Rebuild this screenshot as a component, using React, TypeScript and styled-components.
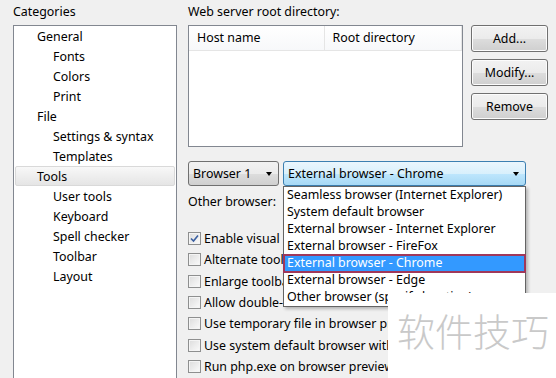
import React from 'react';
import styled, { createGlobalStyle } from 'styled-components';

const GlobalStyle = createGlobalStyle`
  html, body {
    margin: 0;
    padding: 0;
    background: #f0f0f0;
  }
  body {
    font-family: 'Noto Sans', 'Open Sans', Arial, sans-serif;
    font-size: 12.4px;
    color: #000;
  }
`;

const categories: { label: string; child?: boolean; selected?: boolean }[] = [
  { label: 'General' },
  { label: 'Fonts', child: true },
  { label: 'Colors', child: true },
  { label: 'Print', child: true },
  { label: 'File' },
  { label: 'Settings & syntax', child: true },
  { label: 'Templates', child: true },
  { label: 'Tools', selected: true },
  { label: 'User tools', child: true },
  { label: 'Keyboard', child: true },
  { label: 'Spell checker', child: true },
  { label: 'Toolbar', child: true },
  { label: 'Layout', child: true },
];

const browsers = [
  'Seamless browser (Internet Explorer)',
  'System default browser',
  'External browser - Internet Explorer',
  'External browser - FireFox',
  'External browser - Chrome',
  'External browser - Edge',
  'Other browser (specify location)',
];

const options: { label: string; checked?: boolean }[] = [
  { label: 'Enable visual editing toolbar', checked: true },
  { label: 'Alternate toolbar layout' },
  { label: 'Enlarge toolbar buttons' },
  { label: 'Allow double-click in toolbar' },
  { label: 'Use temporary file in browser preview' },
  { label: 'Use system default browser with PHP files' },
  { label: 'Run php.exe on browser preview' },
];

const App: React.FC = () => {
  return (
    <Page>
      <GlobalStyle />
      <LeftColumn>
        <Label>Categories</Label>
        <Tree>
          {categories.map((c) => (
            <TreeRow key={c.label} $child={c.child} $selected={c.selected}>
              {c.label}
            </TreeRow>
          ))}
        </Tree>
      </LeftColumn>
      <RightColumn>
        <Label>Web server root directory:</Label>
        <ServerRow>
          <ListBox>
            <ListHeader>
              <HeaderCell $width={136}>Host name</HeaderCell>
              <HeaderCell $width={138}>Root directory</HeaderCell>
            </ListHeader>
          </ListBox>
          <ButtonStack>
            <Button>Add...</Button>
            <Button>Modify...</Button>
            <Button>Remove</Button>
          </ButtonStack>
        </ServerRow>
        <SelectRow>
          <Select $width={91}>
            Browser 1
            <Arrow />
          </Select>
          <Select $width={243} $active>
            External browser - Chrome
            <Arrow />
          </Select>
          <Dropdown>
            {browsers.map((b) => (
              <DropItem key={b} $selected={b === 'External browser - Chrome'}>
                {b}
              </DropItem>
            ))}
          </Dropdown>
        </SelectRow>
        <OtherRow>Other browser:</OtherRow>
        <CheckList>
          {options.map((o) => (
            <CheckRow key={o.label}>
              <CheckBox $checked={o.checked}>
                {o.checked && (
                  <svg width="9" height="9" viewBox="0 0 9 9">
                    <path d="M1 4.5 L3.5 7 L8 1.5" fill="none" stroke="#3a5fa0" strokeWidth="1.6" />
                  </svg>
                )}
              </CheckBox>
              {o.label}
            </CheckRow>
          ))}
        </CheckList>
      </RightColumn>
      <Watermark>软件技巧</Watermark>
    </Page>
  );
};

export default App;

const Page = styled.div`
  position: relative;
  width: 556px;
  height: 378px;
  overflow: hidden;
  display: flex;
  background: #f0f0f0;
`;

const LeftColumn = styled.div`
  display: flex;
  flex-direction: column;
  padding-left: 13px;
  width: 164px;
  margin-right: 11px;
`;

const Label = styled.div`
  height: 20px;
  line-height: 16px;
  padding-top: 4px;
  box-sizing: border-box;
  margin-bottom: 5px;
  white-space: nowrap;
`;

const Tree = styled.div`
  flex: 1;
  margin-bottom: -20px;
  background: #fff;
  border: 1px solid #828790;
`;

const TreeRow = styled.div<{ $child?: boolean; $selected?: boolean }>`
  height: 20px;
  line-height: 19px;
  box-sizing: border-box;
  margin: 0 1px;
  padding-left: ${(p) => (p.$child ? 37 : 21)}px;
  border: 1px solid ${(p) => (p.$selected ? '#d9d9d9' : 'transparent')};
  border-radius: 2px;
  background: ${(p) =>
    p.$selected ? 'linear-gradient(#f8f8f8, #e5e5e5)' : 'transparent'};
  white-space: nowrap;
`;

const RightColumn = styled.div`
  position: relative;
  flex: 1;
  display: flex;
  flex-direction: column;
`;

const ServerRow = styled.div`
  display: flex;
  gap: 8px;
  height: 122px;
`;

const ListBox = styled.div`
  width: 275px;
  background: #fff;
  border: 1px solid #828790;
  box-sizing: border-box;
`;

const ListHeader = styled.div`
  display: flex;
  height: 24px;
  border-bottom: 1px solid #e5e5e5;
  background: linear-gradient(#fff, #f7f8fa);
`;

const HeaderCell = styled.div<{ $width: number }>`
  width: ${(p) => p.$width}px;
  padding-left: 8px;
  box-sizing: border-box;
  line-height: 24px;
  border-right: 1px solid #e5e5e5;
  white-space: nowrap;
`;

const ButtonStack = styled.div`
  display: flex;
  flex-direction: column;
  gap: 7px;
`;

const Button = styled.div`
  width: 77px;
  height: 27px;
  box-sizing: border-box;
  border: 1px solid #707070;
  border-radius: 3px;
  background: linear-gradient(#f2f2f2 0%, #ebebeb 50%, #dddddd 51%, #cfcfcf 100%);
  box-shadow: inset 0 0 0 1px #fcfcfc;
  display: flex;
  align-items: center;
  justify-content: center;
`;

const SelectRow = styled.div`
  position: relative;
  display: flex;
  gap: 4px;
  margin-top: 14px;
  height: 25px;
`;

const Select = styled.div<{ $width: number; $active?: boolean }>`
  position: relative;
  width: ${(p) => p.$width}px;
  height: 25px;
  box-sizing: border-box;
  padding-left: 4px;
  line-height: 23px;
  border: 1px solid ${(p) => (p.$active ? '#3c7fb1' : '#707070')};
  border-radius: 3px;
  background: ${(p) =>
    p.$active
      ? 'linear-gradient(#eaf6fd 0%, #d9f0fc 50%, #bee6fd 51%, #a7d9f5 100%)'
      : 'linear-gradient(#f2f2f2 0%, #ebebeb 50%, #dddddd 51%, #cfcfcf 100%)'};
  white-space: nowrap;
`;

const Arrow = styled.span`
  position: absolute;
  right: 6px;
  top: 10px;
  width: 0;
  height: 0;
  border-left: 3.5px solid transparent;
  border-right: 3.5px solid transparent;
  border-top: 4px solid #000;
`;

const Dropdown = styled.div`
  position: absolute;
  left: 95px;
  top: 25px;
  width: 243px;
  box-sizing: border-box;
  background: #fff;
  border: 1px solid #646464;
  box-shadow: 2px 2px 3px rgba(0, 0, 0, 0.25);
  z-index: 2;
`;

const DropItem = styled.div<{ $selected?: boolean }>`
  height: 17px;
  line-height: 16px;
  padding-left: 3px;
  box-sizing: border-box;
  white-space: nowrap;
  color: ${(p) => (p.$selected ? '#fff' : '#000')};
  background: ${(p) => (p.$selected ? '#3399ff' : 'transparent')};
  outline: ${(p) => (p.$selected ? '2px solid #a0385a' : 'none')};
  outline-offset: -1px;
`;

const OtherRow = styled.div`
  height: 22px;
  line-height: 22px;
  margin-top: 5px;
`;

const CheckList = styled.div`
  display: flex;
  flex-direction: column;
  margin-top: 15px;
`;

const CheckRow = styled.div`
  display: flex;
  align-items: center;
  gap: 3px;
  height: 21.3px;
  white-space: nowrap;
`;

const CheckBox = styled.span<{ $checked?: boolean }>`
  width: 13px;
  height: 13px;
  box-sizing: border-box;
  border: 1px solid #8e8f8f;
  background: linear-gradient(135deg, #dcdcdc, #fbfbfb);
  box-shadow: inset 0 0 0 1px #f4f4f4;
  display: flex;
  align-items: center;
  justify-content: center;
  flex-shrink: 0;
`;

const Watermark = styled.div`
  position: absolute;
  left: 388px;
  top: 293px;
  right: 0;
  bottom: 0;
  background: #fff;
  color: #c9c9c9;
  font-family: 'Noto Sans CJK SC', sans-serif;
  font-weight: 300;
  font-size: 38px;
  line-height: 74px;
  padding-left: 9px;
  z-index: 5;
`;
